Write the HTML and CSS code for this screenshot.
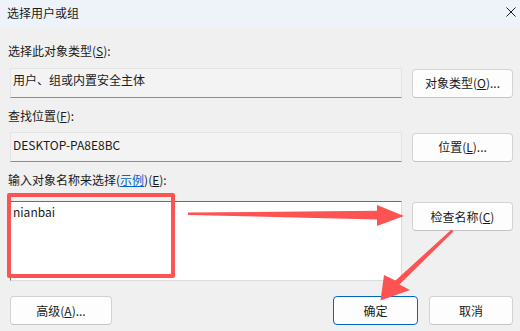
FILE: index.html
```html
<!DOCTYPE html>
<html lang="zh-CN">
<head>
<meta charset="utf-8">
<title>选择用户或组</title>
<link rel="stylesheet" href="styles.css">
</head>
<body>
<div class="window">
  <div class="titlebar">
    <span class="title">选择用户或组</span>
    <svg class="close" width="10" height="10" viewBox="0 0 10 10"><path d="M0.5 0.5 L9.5 9.5 M9.5 0.5 L0.5 9.5" stroke="#1b1b1b" stroke-width="1"/></svg>
  </div>
  <div class="content">
    <div class="label l1">选择此对象类型(<u>S</u>):</div>
    <div class="row r1">
      <div class="field f1">用户、组或内置安全主体</div>
      <button class="btn">对象类型(<u>O</u>)...</button>
    </div>
    <div class="label l2">查找位置(<u>F</u>):</div>
    <div class="row r2">
      <div class="field f2">DESKTOP-PA8E8BC</div>
      <button class="btn">位置(<u>L</u>)...</button>
    </div>
    <div class="label l3">输入对象名称来选择(<span class="link">示例</span>)(<u>E</u>):</div>
    <div class="row r3">
      <div class="textarea">nianbai</div>
      <button class="btn">检查名称(<u>C</u>)</button>
    </div>
    <div class="footer">
      <button class="btn adv">高级(<u>A</u>)...</button>
      <div class="actions">
        <button class="btn primary">确定</button>
        <button class="btn cancel">取消</button>
      </div>
    </div>
  </div>
  <div class="redbox"></div>
  <svg class="arrows" width="520" height="331" viewBox="0 0 520 331">
    <polygon fill="#fd5353" points="188,212.6 377,210.8 377,205 404,216 377,226 377,219.5 188,215"/>
    <polygon fill="#fd5353" points="451.5,229.5 453.5,231.5 399.5,284.5 410,290 380.5,300.5 384,275 395.5,280.5"/>
  </svg>
</div>
</body>
</html>
```
FILE: styles.css
```css
* { box-sizing: border-box; }
html, body { margin: 0; padding: 0; }
body {
  width: 520px;
  height: 331px;
  overflow: hidden;
  background: #f0f0f0;
  font-family: "Noto Sans CJK SC", "Noto Sans", sans-serif;
  font-size: 12px;
  color: #1a1a1a;
}
.window {
  position: relative;
  width: 520px;
  height: 331px;
}
.titlebar {
  height: 27px;
  background: #eef3fa;
  display: flex;
  align-items: center;
  justify-content: space-between;
  padding: 0 4px 0 7px;
}
.title { line-height: 16px; margin-top: -2px; }
.close { margin-top: -4px; }
.content {
  padding: 0 7px 0 10px;
  display: flex;
  flex-direction: column;
}
.label {
  line-height: 16px;
  padding-left: -2px;
  margin-left: -2px;
}
.l1 { margin-top: 16px; }
.l2 { margin-top: 10px; }
.l3 { margin-top: 10px; }
.row {
  display: flex;
  gap: 10px;
  align-items: center;
}
.r1 { margin-top: 9px; }
.r2 { margin-top: 8px; }
.r3 { margin-top: 13px; align-items: flex-start; }
.field {
  width: 392px;
  height: 30px;
  background: #f3f3f3;
  border: 1px solid #e4e4e4;
  border-bottom: 1px solid #8d8d8d;
  padding: 3px 0 0 2px;
  line-height: 16px;
}
.f2 { padding-top: 4px; }
.textarea {
  width: 392px;
  height: 80px;
  background: #ffffff;
  border: 1px solid #dcdcdc;
  border-top: 1.5px solid #6f6f6f;
  border-left: 1px solid #6f6f6f;
  padding: 2px 0 0 2px;
  line-height: 16px;
}
.btn {
  font: inherit;
  color: #1a1a1a;
  width: 101px;
  height: 29px;
  background: #fdfdfd;
  border: 1px solid #d3d3d3;
  border-bottom-color: #c4c4c4;
  border-radius: 4px;
  padding: 0;
  line-height: 16px;
}
.r3 .btn { margin-top: 1px; }
.footer {
  margin-top: 15px;
  display: flex;
  justify-content: space-between;
}
.adv { width: 102px; }
.actions { display: flex; gap: 11px; }
.primary { width: 85px; border: 1px solid #0067c0; }
.cancel { width: 84px; }
.link { color: #0066cc; text-decoration: underline; }
u { text-decoration-thickness: 1px; text-underline-offset: 1px; }
.redbox {
  position: absolute;
  left: 7px;
  top: 193px;
  width: 168px;
  height: 85px;
  border: 4px solid #fd5353;
  border-radius: 2px;
}
.arrows {
  position: absolute;
  left: 0;
  top: 0;
}
```
